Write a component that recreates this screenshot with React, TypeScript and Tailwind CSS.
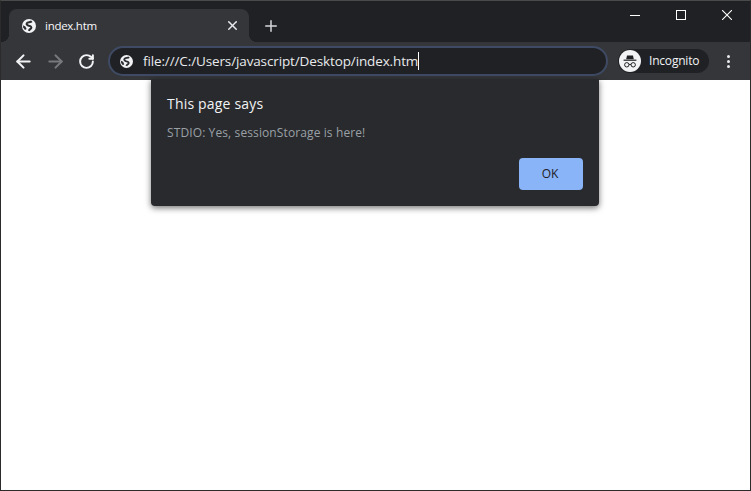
import React from 'react';
import { X, Plus, ArrowLeft, ArrowRight, RotateCw } from 'lucide-react';

function Globe({ className }: { className: string }) {
  return (
    <svg viewBox="0 0 14 14" className={className}>
      <circle cx="7" cy="7" r="7" fill="#f1f3f4" />
      <path
        fill="none"
        stroke="#2b2c30"
        strokeWidth="2"
        strokeLinejoin="round"
        d="M9.8 2.2 C8.6 3.4 5.6 3 4.8 4.2 C4 5.4 5.4 6.4 7 6.8 C8.8 7.2 9.8 8 9.2 9.2 C8.8 10 7.6 10 6.8 11.8"
      />
      <path fill="#2b2c30" d="M1 6.2 L3.4 7.4 L4.6 10 L3 11 L1.2 8.6 Z" />
    </svg>
  );
}

function IncognitoBadge() {
  return (
    <svg viewBox="0 0 22 22" className="h-[22px] w-[22px]">
      <circle cx="11" cy="11" r="11" fill="#f1f3f4" />
      <path fill="#202124" d="M8 5.6h6l.8 3.6H7.2z" />
      <rect x="4.6" y="9.6" width="12.8" height="1.2" fill="#202124" />
      <circle cx="7.8" cy="14.8" r="2.2" fill="none" stroke="#202124" strokeWidth="1" />
      <circle cx="14.2" cy="14.8" r="2.2" fill="none" stroke="#202124" strokeWidth="1" />
      <path stroke="#202124" strokeWidth="1" d="M10 14.4h2" />
    </svg>
  );
}

export default function App() {
  return (
    <div className="relative flex h-[491px] w-[751px] flex-col overflow-hidden border border-t-[#4a4a4a] border-x-[#2b2b2b] border-b-[#2b2b2b] bg-white font-['Open_Sans','Noto_Sans',sans-serif]">
      {/* Title bar */}
      <div className="flex h-[41px] shrink-0 items-end bg-[#202124] pl-2">
        <div className="relative flex h-[33px] w-[240px] items-center rounded-t-lg bg-[#35363a] pl-[13px] pr-[9px] text-white">
          <span className="absolute -left-2 bottom-0 h-2 w-2 bg-[radial-gradient(circle_at_0_0,#202124_8px,#35363a_8px)]"></span>
          <span className="absolute -right-2 bottom-0 h-2 w-2 bg-[radial-gradient(circle_at_100%_0,#202124_8px,#35363a_8px)]"></span>
          <Globe className="h-[14px] w-[14px]" />
          <span className="ml-[9px] flex-1 text-[11.5px] tracking-[-0.27px] text-[#f8f9fa]">index.htm</span>
          <X className="h-[15px] w-[15px] text-[#e8eaed]" strokeWidth={2.4} />
        </div>
        <Plus className="mb-[7px] ml-[13px] h-[18px] w-[18px] text-[#d5d7da]" strokeWidth={2} />
        <div className="mb-[22px] ml-auto flex h-[10px] items-center gap-9 pr-[18px]">
          <svg viewBox="0 0 10 10" className="h-[10px] w-[10px]">
            <rect x="0" y="5" width="10" height="1" fill="#fff" />
          </svg>
          <svg viewBox="0 0 10 10" className="h-[10px] w-[10px]">
            <rect x="0.5" y="0.5" width="9" height="9" fill="none" stroke="#fff" />
          </svg>
          <svg viewBox="0 0 10 10" className="h-[10px] w-[10px]">
            <path d="M0 0L10 10M10 0L0 10" stroke="#fff" strokeWidth="1.1" />
          </svg>
        </div>
      </div>

      {/* Toolbar */}
      <div className="flex h-[38px] shrink-0 items-center bg-[#35363a] pl-3">
        <ArrowLeft className="h-[21px] w-[21px] text-[#f1f3f4]" strokeWidth={2.4} />
        <ArrowRight className="ml-[11px] h-[21px] w-[21px] text-[#77797c]" strokeWidth={2.4} />
        <RotateCw className="ml-3 h-[17px] w-[17px] text-[#f1f3f4]" strokeWidth={2.8} />
        <div className="ml-[13px] flex h-[30px] w-[500px] shrink-0 items-center rounded-full border-2 border-[#3f4b64] bg-[#202124] pl-[10px]">
          <Globe className="h-[13px] w-[13px]" />
          <span className="ml-[10px] text-[13.5px] tracking-[-0.125px] text-[#e8eaed]">file:///C:/Users/javascript/Desktop/index.htm</span>
          <span className="h-[18px] w-px bg-white"></span>
        </div>
        <div className="ml-[10px] flex h-6 w-[91px] shrink-0 items-center rounded-full bg-[#202124] pl-px">
          <IncognitoBadge />
          <span className="ml-2 text-xs tracking-[-0.2px] text-[#f1f3f4]">Incognito</span>
        </div>
        <div className="ml-[18px] flex flex-col gap-[2px]">
          <span className="h-[3px] w-[3px] rounded-full bg-[#e8eaed]"></span>
          <span className="h-[3px] w-[3px] rounded-full bg-[#e8eaed]"></span>
          <span className="h-[3px] w-[3px] rounded-full bg-[#e8eaed]"></span>
        </div>
      </div>

      {/* Alert */}
      <div className="absolute left-[150px] top-[78px] flex h-[127px] w-[448px] flex-col rounded-b-sm bg-[#292a2d] px-4 shadow-[0_2px_6px_rgba(0,0,0,0.55)]">
        <div className="mt-[14px] text-sm leading-[22px] tracking-[0.19px] text-[#f1f3f4]">This page says</div>
        <div className="mt-[9px] text-xs leading-[18px] tracking-[0.11px] text-[#9aa0a6]">STDIO: Yes, sessionStorage is here!</div>
        <div className="mt-auto mb-4 flex justify-end">
          <button className="h-8 w-16 rounded bg-[#8ab4f8] pr-[2px] text-xs text-[#202124]">OK</button>
        </div>
      </div>
    </div>
  );
}
